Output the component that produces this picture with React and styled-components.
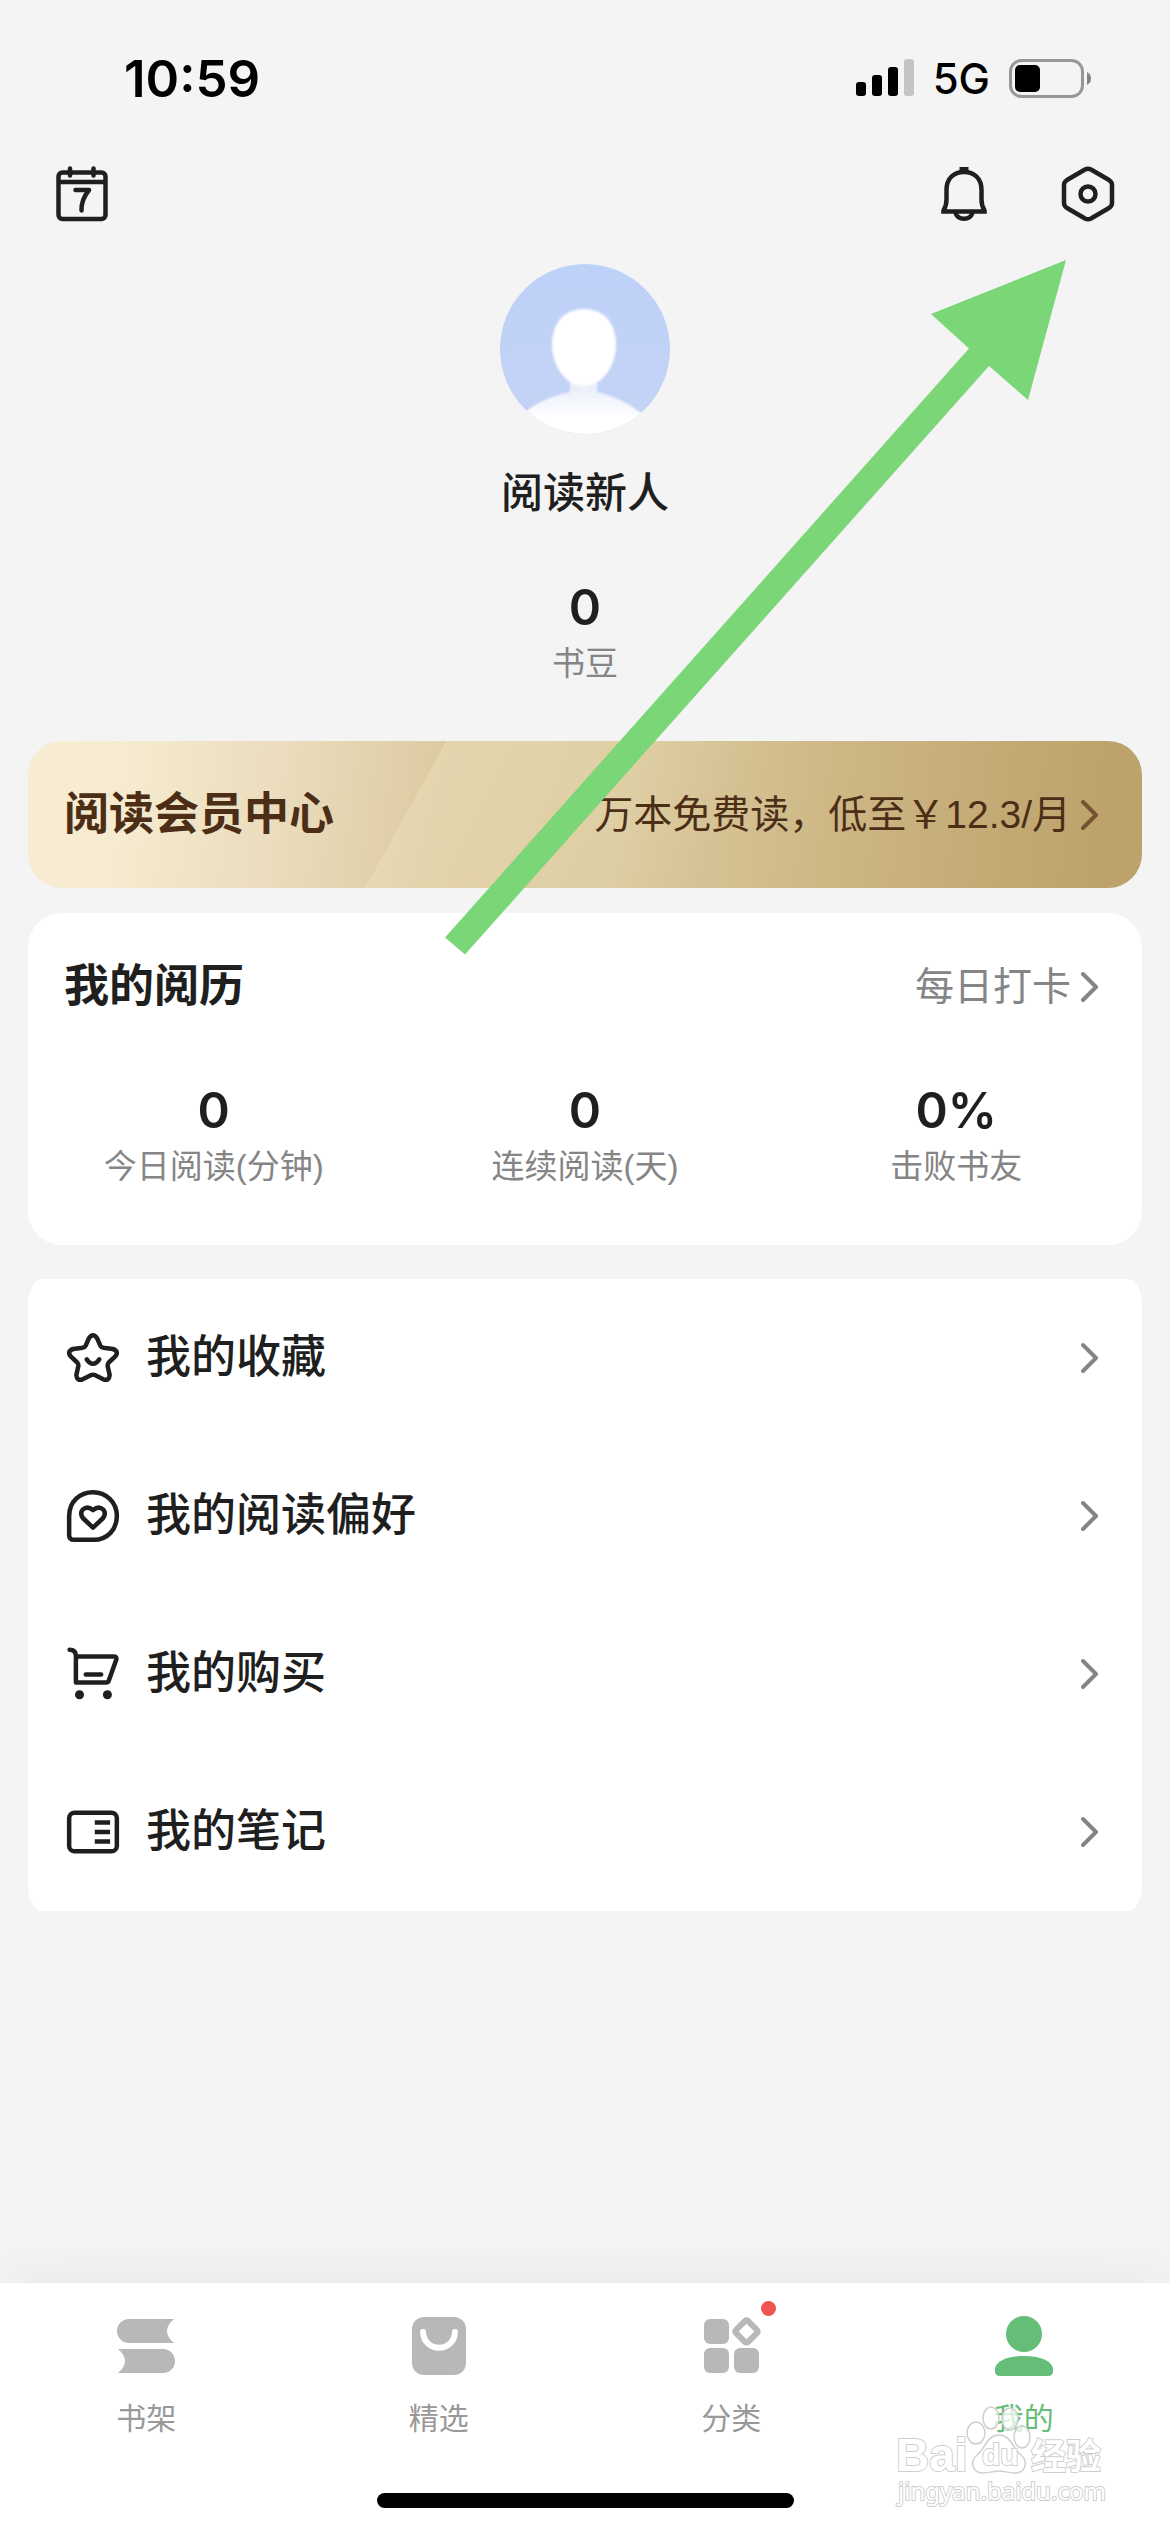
import React from "react";
import styled, { createGlobalStyle } from "styled-components";

const GlobalStyle = createGlobalStyle`
  * {
    box-sizing: border-box;
  }

  body {
    margin: 0;
    background: #f4f4f4;
    color: #1f1f1f;
    font-family: "Liberation Sans", "Noto Sans CJK SC", sans-serif;
  }

  button {
    display: flex;
    align-items: center;
    border: 0;
    padding: 0;
    background: none;
    color: inherit;
    font: inherit;
    cursor: pointer;
  }

  svg {
    display: block;
    flex: none;
  }
`;

const Page = styled.div`
  position: relative;
  display: flex;
  flex-direction: column;
  min-height: 100vh;
  overflow: hidden;
`;

const StatusBar = styled.div`
  display: flex;
  align-items: center;
  justify-content: space-between;
  height: 156px;
  padding: 0 78px 0 124px;
  font-family: Inter, sans-serif;
  color: #000;
`;

const Clock = styled.time`
  font-size: 51px;
  font-weight: 600;
`;

const StatusIcons = styled.div`
  display: flex;
  align-items: center;
  gap: 19px;
  font-size: 42px;
  font-weight: 500;
`;

const TopBar = styled.header`
  display: flex;
  align-items: center;
  justify-content: space-between;
  height: 76px;
  padding: 0 52px;
`;

const TopActions = styled.div`
  display: flex;
  gap: 64px;
`;

const Profile = styled.section`
  display: flex;
  flex-direction: column;
  align-items: center;
  padding-top: 32px;
`;

const UserName = styled.h1`
  margin: 30px 0 52px;
  font-size: 42px;
  line-height: 60px;
  font-weight: 500;
`;

const StatBox = styled.div`
  flex: 1;
  display: flex;
  flex-direction: column;
  align-items: center;
`;

const StatValue = styled.strong`
  font-family: Inter, sans-serif;
  font-size: 49px;
  line-height: 64px;
  font-weight: 600;
`;

const StatLabel = styled.span`
  font-size: 33px;
  line-height: 48px;
  color: #858585;
`;

const Main = styled.main`
  display: flex;
  flex-direction: column;
  padding: 53px 28px 0;
`;

const VipBanner = styled.button`
  justify-content: space-between;
  height: 147px;
  && {
    padding: 0 43px 0 36px;
    color: #4c2e17;
    border-radius: 34px;
    background:
      linear-gradient(119deg, transparent 35%, rgba(240, 228, 190, 0.42) 35%, rgba(240, 228, 190, 0) 62%),
      linear-gradient(97deg, #f8edd4 0%, #f6ebd0 9%, #eadcbc 23%, #ddcaa2 37%, #dccba0 53%, #cdb785 72%, #bda26b 96%);
  }
`;

const Title = styled.span`
  margin: 0;
  font-size: 45px;
  line-height: 64px;
  font-weight: ${(props) => (props.$strong ? 700 : 500)};
`;

const More = styled.span`
  display: flex;
  align-items: center;
  gap: 10px;
  font-size: 39px;
  line-height: 56px;
  color: ${(props) => props.$color || "#858585"};
`;

const MoreButton = styled.button`
  &:focus-visible {
    outline: 3px solid #64be77;
  }
`;

const Card = styled.section`
  margin-top: 25px;
  padding: 42px 0 54px;
  border-radius: 34px;
  background: #fff;
`;

const CardHead = styled.div`
  display: flex;
  align-items: center;
  justify-content: space-between;
  padding: 0 43px 0 36px;
`;

const Stats = styled.div`
  display: flex;
  margin-top: 60px;
`;

const Menu = styled.nav`
  margin-top: 34px;
  border-radius: 14px / 26px;
  background: #fff;
`;

const MenuRow = styled.button`
  width: 100%;
  height: 158px;
  && {
    padding: 0 43px 0 38px;
  }
`;

const MenuText = styled(Title)`
  flex: 1;
  margin-left: 26px;
  text-align: left;
`;

const TabBar = styled.nav`
  margin-top: auto;
  background: #fff;
  box-shadow: 0 0 60px rgba(0, 0, 0, 0.06);
`;

const Tabs = styled.div`
  display: flex;
  height: 210px;
  padding-top: 32px;
`;

const Tab = styled.button`
  position: relative;
  flex: 1;
  flex-direction: column;
  gap: 20px;
  && {
    font-size: 30px;
    line-height: 44px;
    color: ${(props) => (props.$active ? "#64be77" : "#999")};
  }
`;

const Dot = styled.i`
  position: absolute;
  top: -14px;
  left: calc(50% + 30px);
  width: 15px;
  height: 15px;
  border-radius: 50%;
  background: #ee5550;
`;

const HomeIndicator = styled.div`
  width: 417px;
  height: 15px;
  margin: 0 auto 24px;
  border-radius: 8px;
  background: #000;
`;

const Arrow = styled.svg`
  position: absolute;
  top: 260px;
  left: 445px;
  pointer-events: none;
`;

const Watermark = styled.svg`
  position: absolute;
  right: 56px;
  bottom: 16px;
  pointer-events: none;
`;

const Chevron = ({ color = "#858585" }) => (
  <svg width="18" height="32" viewBox="0 0 18 32" fill="none" stroke={color} strokeWidth="4">
    <path d="M2 3l13 13L2 29" strokeLinecap="round" strokeLinejoin="round" />
  </svg>
);

const LineIcon = ({ size = 60, stroke = 4.5, children }) => (
  <svg
    width={size}
    height={size}
    viewBox="0 0 60 60"
    fill="none"
    stroke="#1f1f1f"
    strokeWidth={stroke}
    strokeLinecap="round"
    strokeLinejoin="round"
  >
    {children}
  </svg>
);

const Signal = () => (
  <svg width="58" height="38" viewBox="0 0 58 38">
    <rect x="0" y="23" width="10" height="14" rx="3" />
    <rect x="16" y="16" width="10" height="21" rx="3" />
    <rect x="32" y="8" width="10" height="29" rx="3" />
    <rect x="48" y="0" width="10" height="37" rx="3" fill="#c4c4c4" />
  </svg>
);

const Battery = () => (
  <svg width="83" height="39" viewBox="0 0 83 39">
    <rect x="1.5" y="1.5" width="72" height="36" rx="11" fill="none" stroke="#979797" strokeWidth="3" />
    <rect x="6" y="6" width="25" height="27" rx="5" />
    <path d="M78 13q4 2 4 6.500t-4 6.500z" fill="#858585" />
  </svg>
);

const Avatar = () => (
  <svg width="170" height="170" viewBox="0 0 170 170" role="img" aria-label="头像">
    <defs>
      <clipPath id="round">
        <circle cx="85" cy="85" r="85" />
      </clipPath>
      <linearGradient id="sky" x1="0" y1="0" x2="0" y2="1">
        <stop offset="0" stopColor="#bed1f8" />
        <stop offset="1" stopColor="#c4d3f5" />
      </linearGradient>
      <linearGradient id="body" x1="0" y1="0" x2="0" y2="1">
        <stop offset="0" stopColor="#e4e8fa" />
        <stop offset="0.6" stopColor="#fff" />
      </linearGradient>
      <filter id="soft">
        <feGaussianBlur stdDeviation="1" />
      </filter>
    </defs>
    <g clipPath="url(#round)">
      <rect width="170" height="170" fill="url(#sky)" />
      <g filter="url(#soft)">
        <path d="M70 112h27v16c24 6 40 16 54 30v22H14v-22c16-16 32-25 56-30z" fill="url(#body)" />
        <path d="M84 45c20 0 32 14 32 36 0 20-13 41-32 41S52 101 52 81c0-22 12-36 32-36z" fill="#fff" />
      </g>
    </g>
  </svg>
);

const stats = [
  { value: "0", label: "今日阅读(分钟)" },
  { value: "0", label: "连续阅读(天)" },
  { value: "0%", label: "击败书友" },
];

const menu = [
  {
    name: "我的收藏",
    icon: (
      <>
        <path d="M25.500 8Q30 1.500 34.500 8L38 16Q39 18 41.500 18.500L52 20Q59.500 22.500 54.500 28.500L47.500 35Q46 36.500 46.200 38.500L48.500 49Q48 55.500 42 54L32 49Q30 48 28 49L18 54Q12 55.500 11.500 49L13.800 38.500Q14 36.500 12.500 35L5.500 28.500Q.5 22.500 8 20L18.500 18.500Q21 18 22 16Z" />
        <path d="M23 31.500q7 10 14 0" />
      </>
    ),
  },
  {
    name: "我的阅读偏好",
    icon: (
      <>
        <path d="M3.500 51V30C3.500 14 15.500 3.500 30 3.500S56.500 14.500 56.500 30 45.500 56.500 31 56.500H9Q3.500 56.500 3.500 51z" />
        <path d="M30 43L19 32.500q-4-5-.5-9.500 5.500-5 11.500.5 6-5.500 11.500-.5 3.500 4.500-.5 9.500z" />
      </>
    ),
  },
  {
    name: "我的购买",
    icon: (
      <>
        <path d="M4 3q7 0 7 7v29.500h33q3 0 3.500-2L56 13.500q.5-3-3-3H11.500" />
        <path d="M22 30.500h17" />
        <g fill="#1f1f1f" stroke="none">
          <circle cx="15" cy="53" r="5" />
          <circle cx="46" cy="53" r="5" />
        </g>
      </>
    ),
  },
  {
    name: "我的笔记",
    icon: (
      <>
        <rect x="3.500" y="8.500" width="53" height="43" rx="6" />
        <path d="M32 19.500h17M32 30h17M32 40.500h17" strokeLinecap="butt" />
      </>
    ),
  },
];

const tabs = [
  {
    name: "书架",
    icon: (
      <>
        <path d="M13 4h45q-14 12 0 24H13a12 12 0 010-24z" />
        <path d="M2 34h45a12 12 0 010 24H2q14-12 0-24z" />
      </>
    ),
  },
  {
    name: "精选",
    icon: (
      <>
        <rect x="3" y="2" width="54" height="58" rx="12" />
        <path d="M14 17c1 21 31 21 32 0" fill="none" stroke="#fff" strokeWidth="6" strokeLinecap="round" />
      </>
    ),
  },
  {
    name: "分类",
    dot: true,
    icon: (
      <>
        <rect x="3" y="4" width="25" height="25" rx="6" />
        <rect x="3" y="33" width="25" height="25" rx="6" />
        <rect x="33" y="33" width="25" height="25" rx="6" />
        <rect
          x="37"
          y="8"
          width="17"
          height="17"
          rx="2"
          fill="none"
          stroke="#b8b8b8"
          strokeWidth="6"
          strokeLinejoin="round"
          transform="rotate(45 45.500 16.500)"
        />
      </>
    ),
  },
  {
    name: "我的",
    active: true,
    icon: (
      <>
        <circle cx="30" cy="19" r="18" />
        <path d="M1 53C3 45 15 41 30 41s27 4 29 12v3q0 5-5 5H6q-5 0-5-5z" />
      </>
    ),
  },
];

const App = () => {
  return (
    <Page>
      <GlobalStyle />
      <StatusBar>
        <Clock>10:59</Clock>
        <StatusIcons>
          <Signal />
          <span>5G</span>
          <Battery />
        </StatusIcons>
      </StatusBar>

      <TopBar>
        <button aria-label="签到">
          <LineIcon>
            <rect x="6.500" y="8.500" width="47" height="46.500" rx="4" />
            <path d="M7 18h46M18 4.500v7M41.500 4.500v7" />
            <path d="M23.500 26H37q-8 10-7.500 20.500" />
          </LineIcon>
        </button>
        <TopActions>
          <button aria-label="消息">
            <LineIcon>
              <path d="M25.500 3h9v5h-9z" fill="#1f1f1f" stroke="none" />
              <path
                d="M9.500 47.500h41v-1q-3-5-3-11V26C47.500 14 40 8 30 8S12.500 14 12.500 26v9.500q0 6-3 11z"
                strokeLinejoin="miter"
              />
              <path d="M21.500 48c1 9 16 9 17 0" />
            </LineIcon>
          </button>
          <button aria-label="设置">
            <LineIcon>
              <path d="M27 5.500q3-1.500 6 0L51 16q3 2 3 5v18q0 3-3 5L33 54.500q-3 1.500-6 0L9 44q-3-2-3-5V21q0-3 3-5z" />
              <circle cx="30" cy="30" r="7.500" />
            </LineIcon>
          </button>
        </TopActions>
      </TopBar>

      <Profile>
        <Avatar />
        <UserName>阅读新人</UserName>
        <StatBox>
          <StatValue>0</StatValue>
          <StatLabel>书豆</StatLabel>
        </StatBox>
      </Profile>

      <Main>
        <VipBanner>
          <Title $strong>阅读会员中心</Title>
          <More $color="#4c2e17">
            万本免费读，低至￥12.3/月
            <Chevron color="#735334" />
          </More>
        </VipBanner>

        <Card>
          <CardHead>
            <Title as="h2" $strong>
              我的阅历
            </Title>
            <MoreButton>
              <More>
                每日打卡
                <Chevron />
              </More>
            </MoreButton>
          </CardHead>
          <Stats>
            {stats.map((stat) => (
              <StatBox key={stat.label}>
                <StatValue>{stat.value}</StatValue>
                <StatLabel>{stat.label}</StatLabel>
              </StatBox>
            ))}
          </Stats>
        </Card>

        <Menu>
          {menu.map((item) => (
            <MenuRow key={item.name}>
              <LineIcon size={54} stroke={5}>
                {item.icon}
              </LineIcon>
              <MenuText>{item.name}</MenuText>
              <Chevron />
            </MenuRow>
          ))}
        </Menu>
      </Main>

      <TabBar>
        <Tabs>
          {tabs.map((tab) => (
            <Tab key={tab.name} $active={tab.active}>
              <svg width="60" height="62" viewBox="0 0 60 62" fill={tab.active ? "#64be77" : "#b8b8b8"}>
                {tab.icon}
              </svg>
              {tab.name}
              {tab.dot && <Dot />}
            </Tab>
          ))}
        </Tabs>
        <HomeIndicator />
      </TabBar>

      <Arrow width="622" height="696" viewBox="0 0 622 696">
        <path d="M621 0L486 54l38 34.500L0 677.500l20 17L544 106l39 34z" fill="#7bd678" />
      </Arrow>

      <Watermark width="224" height="118" viewBox="0 0 224 118" fill="#fff" stroke="#cfcfcf" strokeWidth="2">
        <g fillOpacity="0.75" strokeWidth="1.5">
          <ellipse cx="86" cy="35" rx="9" ry="11" />
          <ellipse cx="101" cy="20" rx="8" ry="11" />
          <ellipse cx="120" cy="21" rx="8" ry="11" />
          <ellipse cx="132" cy="39" rx="8" ry="11" />
          <path d="M109 37c-12 0-13 13-22 20-8 7-4 18 6 18 8 0 10-2 16-2s8 2 16 2c10 0 14-11 6-18-9-7-10-20-22-20z" />
        </g>
        <g paintOrder="stroke" fontFamily="Liberation Sans, sans-serif" fontWeight="700">
          <text x="6" y="73" fontSize="46">Bai</text>
          <text x="92" y="67" fontSize="30">du</text>
          <text x="141" y="71" fontSize="35" fontFamily="Noto Sans CJK SC, sans-serif">经验</text>
          <text x="8" y="102" fontSize="24" fontWeight="400" fontFamily="Noto Sans, sans-serif">
            jingyan.baidu.com
          </text>
        </g>
      </Watermark>
    </Page>
  );
};

export default App;
